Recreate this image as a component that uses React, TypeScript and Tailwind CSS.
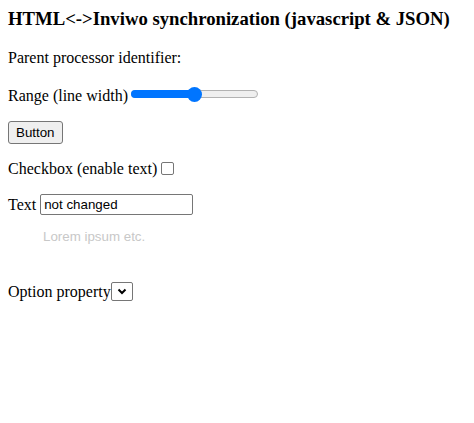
import React from 'react';

const serif = "font-['Liberation_Serif',serif]";
const sans = "font-['Liberation_Sans',Arial,sans-serif]";

// Chrome-style range slider, drawn by hand so preflight does not touch it
const RangeSlider: React.FC<{ value: number }> = ({ value }) => (
  <span className="relative inline-block w-[127px] h-[16px] align-[-1px] ml-[3px]">
    <span className="absolute left-0 right-0 top-[4px] h-[8px] rounded-full bg-[#efefef] border border-[#b2b2b2]" />
    <span
      className="absolute left-0 top-[4px] h-[8px] rounded-full bg-[#0075ff]"
      style={{ width: `${value}%` }}
    />
    <span
      className="absolute top-[1px] w-[15px] h-[15px] -ml-[7px] rounded-full bg-[#0075ff]"
      style={{ left: `${value}%` }}
    />
  </span>
);

export default function App() {
  const [checked, setChecked] = React.useState(false);
  const [text, setText] = React.useState('not changed');

  return (
    <div className={`${serif} text-[16px] text-black leading-[18px] px-2 pt-2 bg-white min-h-[423px]`}>
      <h3 className="text-[18.72px] font-bold leading-[21px]">
        HTML&lt;-&gt;Inviwo synchronization (javascript &amp; JSON)
      </h3>

      <p className="mt-[20px]">Parent processor identifier:</p>

      <p className="mt-[19px]">
        Range (line width)
        <RangeSlider value={50} />
      </p>

      <p className="mt-[16px]">
        <button
          className={`${sans} text-[13.33px] leading-[15px] px-[7px] py-[3px] border border-[#767676] rounded-[3px] bg-[#efefef] text-black`}
        >
          Button
        </button>
      </p>

      <p className="mt-[16px]">
        Checkbox (enable text)
        <span
          onClick={() => setChecked(!checked)}
          className="inline-block w-[13px] h-[13px] ml-[4px] border border-[#767676] rounded-[2px] bg-white align-[-1px] cursor-pointer"
        />
      </p>

      <p className="mt-[16px]">
        Text{' '}
        <input
          value={text}
          onChange={(e) => setText(e.target.value)}
          className={`${sans} text-[13.33px] w-[153px] h-[21px] px-[3px] border border-[#767676] rounded-[2px] bg-white align-[1px]`}
        />
      </p>

      <p
        className={`${sans} text-[13.33px] leading-[16px] mt-[14px] ml-[35px] text-[#c8c8c8] [text-shadow:1px_1px_0_#ffffff]`}
      >
        Lorem ipsum etc.
      </p>

      <p className="mt-[37px]">
        Option property
        <span className="inline-block overflow-hidden w-[22px] h-[19px] border border-[#767676] rounded-[2px] bg-white align-[-4px]">
          <span className="flex h-full items-center justify-center">
            <svg width="10" height="7" viewBox="0 0 10 7">
              <path d="M1.5 1.5 L5 5 L8.5 1.5" fill="none" stroke="black" strokeWidth="2" />
            </svg>
          </span>
        </span>
      </p>
    </div>
  );
}
